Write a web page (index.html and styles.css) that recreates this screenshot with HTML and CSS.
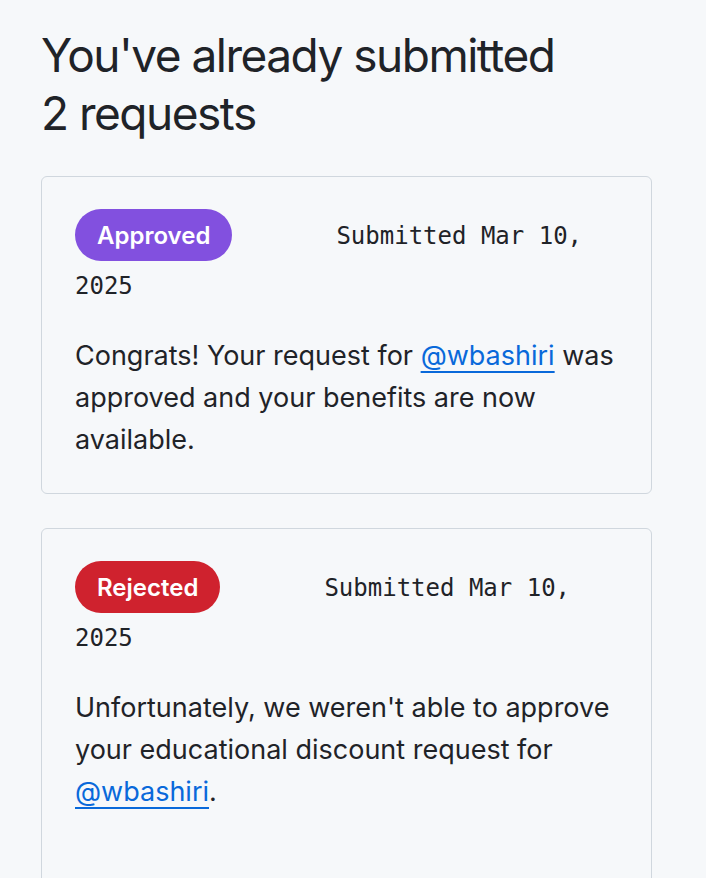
FILE: index.html
```html
<!DOCTYPE html>
<html lang="en">
<head>
<meta charset="utf-8">
<title>Requests</title>
<link rel="stylesheet" href="styles.css">
</head>
<body>
<main class="page">
  <h1 class="title">You've already submitted 2 requests</h1>
  <section class="card">
    <div class="card-head"><span class="badge badge-approved">Approved</span><span class="date">Submitted Mar 10, 2025</span></div>
    <p class="card-text">Congrats! Your request for <a href="#" class="link">@wbashiri</a> was approved and your benefits are now available.</p>
  </section>
  <section class="card">
    <div class="card-head"><span class="badge badge-rejected">Rejected</span><span class="date">Submitted Mar 10, 2025</span></div>
    <p class="card-text">Unfortunately, we weren't able to approve your educational discount request for <a href="#" class="link">@wbashiri</a>.</p>
    <div class="card-spacer"></div>
  </section>
</main>
</body>
</html>
```

FILE: styles.css
```css
html, body {
  margin: 0;
  padding: 0;
  background: #f6f8fa;
}
body {
  font-family: Inter, "Liberation Sans", sans-serif;
  color: #1f2328;
}
.page {
  padding: 26px 0 0 41px;
  width: 611px;
}
.title {
  margin: 0 0 34px 0;
  font-size: 46px;
  line-height: 58px;
  font-weight: 400;
  letter-spacing: -1.5px;
  width: 530px;
}
.card {
  border: 1px solid #d0d7de;
  border-radius: 6px;
  padding: 32px 33px 32px 33px;
  margin-bottom: 34px;
}
.card-head {
  font-family: "DejaVu Sans Mono", "Liberation Mono", monospace;
  font-size: 24px;
  line-height: 50px;
}
.badge {
  display: inline-block;
  height: 52px;
  line-height: 53px;
  padding: 0 22px;
  border-radius: 26px;
  color: #ffffff;
  font-family: Inter, "Liberation Sans", sans-serif;
  font-weight: 600;
  font-size: 24px;
  vertical-align: baseline;
}
.badge-approved { background: #8250df; }
.badge-rejected { background: #cf222e; }
.date {
  margin-left: 104px;
}
.card-text {
  margin: 24px 0 0 0;
  font-size: 27px;
  line-height: 42px;
}
.link {
  color: #0969da;
  text-decoration: underline;
  text-underline-offset: 6px;
  text-decoration-thickness: 2px;
}
.card-spacer {
  height: 80px;
}
```
